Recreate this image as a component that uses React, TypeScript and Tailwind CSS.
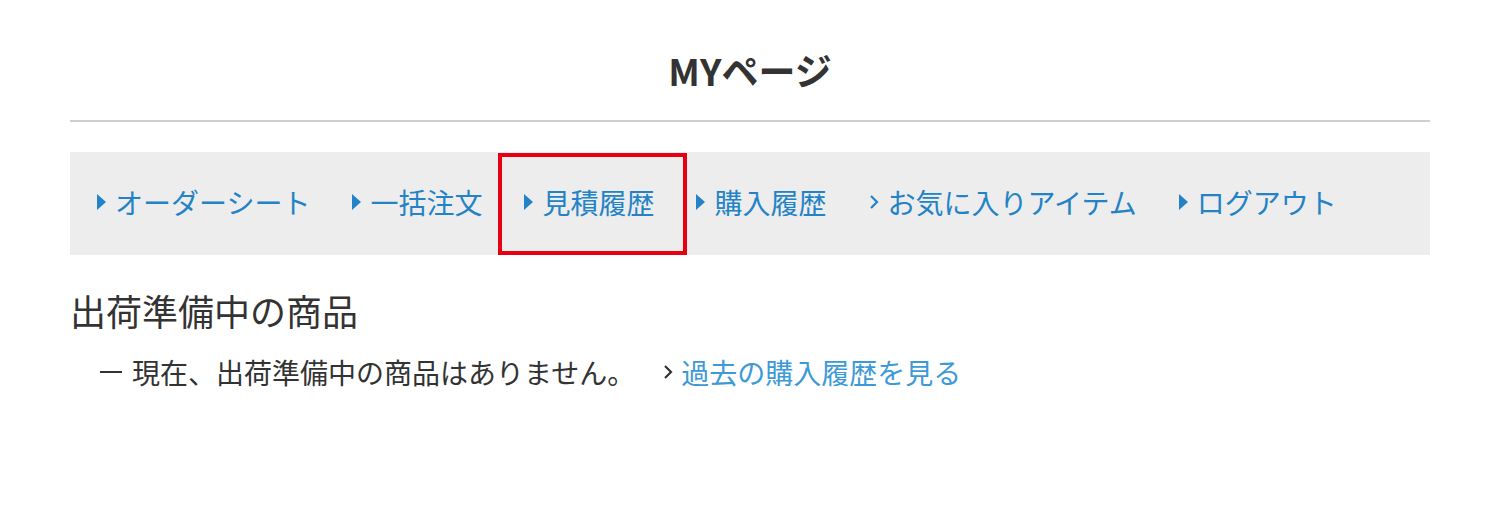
const navItems = [
  { label: "オーダーシート", icon: "tri" },
  { label: "一括注文", icon: "tri" },
  { label: "見積履歴", icon: "tri", marked: true },
  { label: "購入履歴", icon: "tri" },
  { label: "お気に入りアイテム", icon: "chev" },
  { label: "ログアウト", icon: "tri" },
];

function Triangle() {
  return (
    <svg viewBox="0 0 9 16" className="h-[16px] w-[9px] shrink-0">
      <path d="M0 0 L9 8 L0 16 Z" fill="currentColor" />
    </svg>
  );
}

function Chevron({ className = "" }: { className?: string }) {
  return (
    <svg viewBox="0 0 10 16" className={"h-[16px] w-[10px] shrink-0 " + className}>
      <path d="M2 2 L8 8 L2 14" fill="none" stroke="currentColor" strokeWidth="2.2" />
    </svg>
  );
}

export default function App() {
  return (
    <div
      className="min-h-[506px] w-[1360px] ml-[70px] bg-white text-[#333]"
      style={{ fontFamily: '"Noto Sans CJK JP", "Noto Sans", sans-serif' }}
    >
      <h1 className="pt-[46px] text-center text-[37px] font-bold leading-[48px]">MYページ</h1>
      <div className="mt-[26px] h-[2px] bg-[#cfcfcf]" />

      <nav className="mt-[30px] flex h-[103px] items-center gap-x-[42px] bg-[#ededed] pb-[4px] pl-[27px] text-[#2383c6]">
        {navItems.map((item) => (
          <a key={item.label} href="#" className="relative flex items-center gap-[9px] text-[28px] leading-none">
            {item.icon === "tri" ? <Triangle /> : <Chevron />}
            <span>{item.label}</span>
            {item.marked && (
              <span className="pointer-events-none absolute -top-[35px] -bottom-[39px] -left-[26px] -right-[33px] border-4 border-[#e60012]" />
            )}
          </a>
        ))}
      </nav>

      <h2 className="mt-[31px] text-[36px] leading-[48px]">出荷準備中の商品</h2>
      <div className="mt-[18px] flex items-center pl-[30px] text-[28px] leading-[40px]">
        <span className="h-[2px] w-[22px] bg-[#333]" />
        <span className="ml-[10px]">現在、出荷準備中の商品はありません。</span>
        <a href="#" className="ml-[28px] flex items-center gap-[8px] text-[#3d9ad6]">
          <Chevron className="text-[#333]" />
          <span>過去の購入履歴を見る</span>
        </a>
      </div>
    </div>
  );
}
